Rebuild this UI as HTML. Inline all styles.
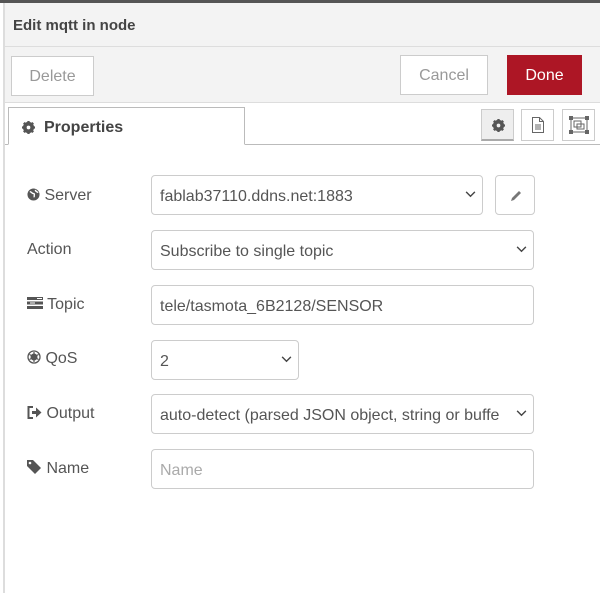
<!DOCTYPE html>
<html><head><style>
*{box-sizing:border-box;margin:0;padding:0}
body{width:600px;height:593px;overflow:hidden;background:#fff;font-family:"Liberation Sans",sans-serif;position:relative;color:#555}
.top{position:absolute;left:0;top:0;width:600px;height:3px;background:#555}
.lb{position:absolute;left:3px;top:3px;width:2px;height:590px;background:#ddd}
.hdr{position:absolute;left:5px;top:3px;width:595px;height:44px;background:#f3f3f3;border-bottom:1px solid #ddd;font-weight:bold;font-size:15px;color:#444;padding:14px 0 0 8px}
.tb{position:absolute;left:5px;top:47px;width:595px;height:56px;background:#f3f3f3;border-bottom:1px solid #ddd}
.btn{position:absolute;height:40px;border:1px solid #ccc;background:#fff;color:#999;font-size:16px;text-align:center;line-height:40px}
.tabs{position:absolute;left:5px;top:103px;width:595px;height:42px;background:#fff;border-bottom:1px solid #bbb}
.tab{position:absolute;left:3px;top:4px;width:237px;height:38px;border:1px solid #bbb;border-bottom:1px solid #fff;background:#fff;font-weight:bold;font-size:16px;color:#444;padding:11px 0 0 35px}
.ib{position:absolute;top:109px;width:33px;height:32px;border:1px solid #ccc;background:#fff}
.lbl{position:absolute;left:27px;font-size:16px;color:#555}
.in{position:absolute;left:151px;height:40px;border:1px solid #ccc;border-radius:4px;background:#fff;font-size:16px;color:#555;padding:12px 0 0 8px;white-space:nowrap;overflow:hidden}
.chev{position:absolute;right:6px;top:15px}
</style></head><body>
<div class="top"></div><div class="lb"></div>
<div class="hdr">Edit mqtt in node</div>
<div class="tb"></div>
<div class="btn" style="left:11px;top:56px;width:83px">Delete</div>
<div class="btn" style="left:400px;top:55px;width:88px">Cancel</div>
<div class="btn" style="left:507px;top:55px;width:75px;background:#ad1625;border-color:#ad1625;color:#fff">Done</div>
<div class="tabs"><div class="tab"><svg width="13" height="13" viewBox="0 0 14 14" style="position:absolute;left:13px;top:13px"><circle cx="7" cy="7" r="4.5" fill="none" stroke="#555" stroke-width="3"/><path d="M7 0v14M0 7h14M2 2l10 10M12 2L2 12" stroke="#555" stroke-width="2.5"/><circle cx="7" cy="7" r="2" fill="#fff"/></svg>Properties</div></div>
<div class="ib" style="left:481px;background:#eee;border-bottom:2px solid #aaa"><svg width="13" height="13" viewBox="0 0 14 14" style="position:absolute;left:10px;top:9px"><circle cx="7" cy="7" r="4.5" fill="none" stroke="#555" stroke-width="3"/><path d="M7 0v14M0 7h14M2 2l10 10M12 2L2 12" stroke="#555" stroke-width="2.5"/><circle cx="7" cy="7" r="2" fill="#eee"/></svg></div>
<div class="ib" style="left:521px"><svg width="14" height="16" viewBox="0 0 14 16" style="position:absolute;left:9px;top:7px"><path d="M1.5 .5h7l4 4v11h-11z M8.5 .5v4h4" fill="none" stroke="#666"/><path d="M4 8h6M4 10h6M4 12h6" stroke="#666"/></svg></div>
<div class="ib" style="left:562px"><svg width="20" height="18" viewBox="0 0 20 18" style="position:absolute;left:6px;top:6px"><rect x="2" y="2" width="16" height="14" fill="none" stroke="#666"/><rect x="5" y="5" width="7" height="6" fill="none" stroke="#666"/><rect x="8" y="8" width="7" height="5" fill="none" stroke="#666"/><path d="M0 0h4v4h-4zM16 0h4v4h-4zM0 14h4v4h-4zM16 14h4v4h-4z" fill="#666"/></svg></div>

<div class="lbl" style="top:187px"><svg width="13" height="13" viewBox="0 0 14 14" style="vertical-align:-1px"><circle cx="7" cy="7" r="6.5" fill="#555"/><path d="M3 4c2 0 2 2 4 2s0 3 1 4M9 2c0 2 2 2 3 3" stroke="#fff" stroke-width="1.5" fill="none"/></svg> Server</div>
<div class="in" style="top:175px;width:332px">fablab37110.ddns.net:1883<svg class="chev" width="11" height="7" viewBox="0 0 12 8"><path d="M1 1l5 5 5-5" stroke="#444" stroke-width="1.6" fill="none"/></svg></div>
<div class="in" style="top:175px;left:495px;width:40px;padding:0"><svg width="14" height="14" viewBox="0 0 14 14" style="position:absolute;left:13px;top:13px"><path d="M2 12l1-3 7-7 2 2-7 7z" fill="#777"/></svg></div>
<div class="lbl" style="top:241px">Action</div>
<div class="in" style="top:230px;width:383px">Subscribe to single topic<svg class="chev" width="11" height="7" viewBox="0 0 12 8"><path d="M1 1l5 5 5-5" stroke="#444" stroke-width="1.6" fill="none"/></svg></div>
<div class="lbl" style="top:296px"><svg width="16" height="12" viewBox="0 0 16 12" style="vertical-align:0"><path d="M0 0h16v3H0zM0 4.5h16v3H0zM0 9h16v3H0z" fill="#555"/><path d="M10 1.5h5M3 6h5" stroke="#fff"/></svg> Topic</div>
<div class="in" style="top:285px;width:383px">tele/tasmota_6B2128/SENSOR</div>
<div class="lbl" style="top:350px"><svg width="14" height="14" viewBox="0 0 14 14" style="vertical-align:-1px"><circle cx="7" cy="7" r="6" fill="none" stroke="#555" stroke-width="1.3"/><circle cx="7" cy="7" r="3.5" fill="#555"/><path d="M7 2v10M2.5 4.5l9 5M11.5 4.5l-9 5" stroke="#555" stroke-width="1.2"/></svg> QoS</div>
<div class="in" style="top:340px;width:148px">2<svg class="chev" width="11" height="7" viewBox="0 0 12 8"><path d="M1 1l5 5 5-5" stroke="#444" stroke-width="1.6" fill="none"/></svg></div>
<div class="lbl" style="top:405px"><svg width="15" height="13" viewBox="0 0 15 13" style="vertical-align:-1px"><path d="M6 1H1.5v11H6" stroke="#555" stroke-width="2" fill="none"/><path d="M5 5h4V1.5l5.5 5-5.5 5V8H5z" fill="#555"/></svg> Output</div>
<div class="in" style="top:394px;width:383px;padding-right:20px">auto-detect (parsed JSON object, string or buffe<svg class="chev" width="11" height="7" viewBox="0 0 12 8" style="background:#fff"><path d="M1 1l5 5 5-5" stroke="#444" stroke-width="1.6" fill="none"/></svg></div>
<div class="lbl" style="top:460px"><svg width="15" height="14" viewBox="0 0 15 14" style="vertical-align:-1px"><path d="M0 0h6l8 8-6 6-8-8z" fill="#555"/><circle cx="3" cy="3" r="1.3" fill="#fff"/></svg> Name</div>
<div class="in" style="top:449px;width:383px;color:#aaa">Name</div>
</body></html>
